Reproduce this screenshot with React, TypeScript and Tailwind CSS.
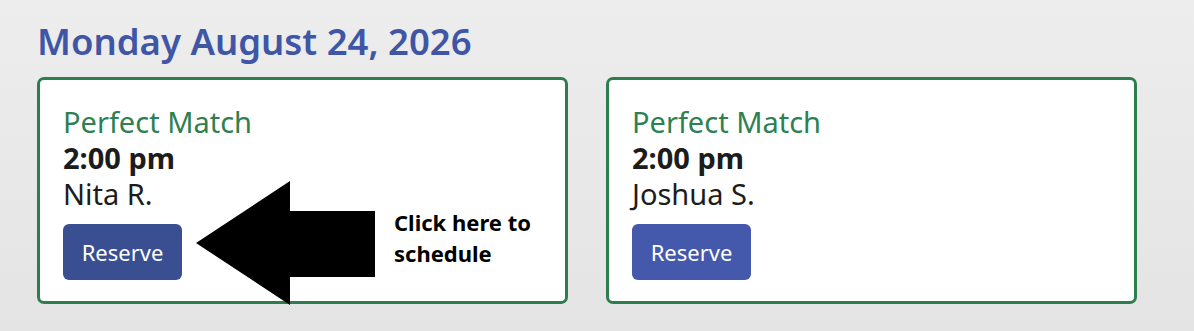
const cards = [
  { name: "Nita R.", active: true },
  { name: "Joshua S.", active: false },
];

function Arrow() {
  return (
    <svg
      className="absolute left-0 top-0 pointer-events-none"
      width="531"
      height="240"
      viewBox="0 0 531 240"
    >
      <polygon points="156,163 250,101 250,131 335,131 335,197 250,197 250,225" fill="#000" />
    </svg>
  );
}

function Card({ name, active }: { name: string; active: boolean }) {
  return (
    <div className="relative w-[531px] h-[227px] bg-white border-[3px] border-[#2e7d4f] rounded-[7px] pl-[23px] pt-[24px]">
      <div className="text-[29px] leading-[36px] text-[#2e8050]">Perfect Match</div>
      <div className="text-[29px] leading-[36px] font-bold text-[#1c1c1c]">2:00 pm</div>
      <div className="text-[29px] leading-[36px] text-[#1c1c1c]">{name}</div>
      <button
        className={`mt-[12px] w-[119px] h-[56px] rounded-[6px] text-white text-[22px] ${
          active ? "bg-[#3a4e92]" : "bg-[#4459ab]"
        }`}
      >
        Reserve
      </button>
      {active && (
        <>
          <Arrow />
          <div className="absolute left-[354px] top-[127px] text-[22px] leading-[31px] font-bold text-black">
            Click here to
            <br />
            schedule
          </div>
        </>
      )}
    </div>
  );
}

export default function App() {
  return (
    <div
      className="w-[1194px] h-[331px] bg-gradient-to-b from-[#ededed] to-[#e4e4e4] pl-[37px] pt-[16px]"
      style={{ fontFamily: '"Noto Sans", "Open Sans", sans-serif' }}
    >
      <h1 className="text-[36.5px] leading-[50px] font-semibold text-[#3f56a6] mb-[11px]">
        Monday August 24, 2026
      </h1>
      <div className="flex gap-[38px]">
        {cards.map((c, i) => (
          <Card key={i} {...c} />
        ))}
      </div>
    </div>
  );
}
